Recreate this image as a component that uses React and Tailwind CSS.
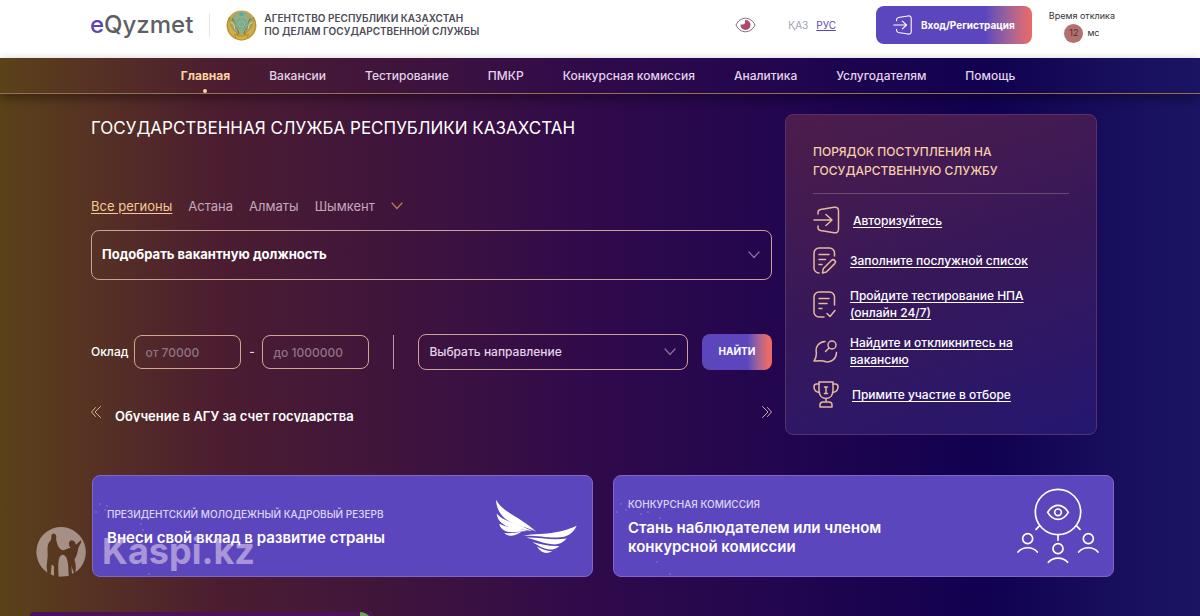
import React, { useState } from 'react';

const NAV_ITEMS = [
    'Главная',
    'Вакансии',
    'Тестирование',
    'ПМКР',
    'Конкурсная комиссия',
    'Аналитика',
    'Услугодателям',
    'Помощь'
];

const REGIONS = ['Все регионы', 'Астана', 'Алматы', 'Шымкент'];

const RAYS = Array.from({ length: 24 }, (_, i) => i * 15);

const SPARKS = [[7, 28], [14, 30], [3, 36], [12, 34], [34, 36], [46, 42], [48, 48], [43, 86], [56, 98], [27, 38], [50, 54]];

const Emblem = () => (
    <svg width="31" height="31" viewBox="0 0 62 62" aria-hidden="true">
        <circle cx="31" cy="31" r="30" fill="#c4a547" />
        <circle cx="31" cy="26" r="22" fill="#8fae86" />
        <path d="M7 14C-1 30 4 48 18 56c8-5 4-12-1-15-7-5-9-15-10-27Z" fill="#d3ae48" stroke="#8f742c" />
        <path d="M55 14c8 16 3 34-11 42-8-5-4-12 1-15 7-5 9-15 10-27Z" fill="#d3ae48" stroke="#8f742c" />
        <path d="M12 17c5 5 8 11 7 18 4 3 7 8 6 14M50 17c-5 5-8 11-7 18-4 3-7 8-6 14" fill="none" stroke="#96752c" strokeWidth="3" />
        <path d="M9 25c6 1 9 6 8 12M53 25c-6 1-9 6-8 12" fill="none" stroke="#efd577" strokeWidth="2" />
        <circle cx="31" cy="28" r="13" fill="#5ba5a0" />
        {RAYS.map((a) => (
            <path key={a} d="M31 20V12" stroke="#b9bd74" strokeWidth="1" transform={`rotate(${a} 31 28)`} />
        ))}
        <circle cx="31" cy="28" r="6" fill="none" stroke="#cfc777" strokeWidth="1.5" />
        <path d="M27 24l8 8M35 24l-8 8" stroke="#c2b861" strokeWidth="1.5" />
        <path d="M31 2l2 4h4l-3 3 1 4-4-2-4 2 1-4-3-3h4Z" fill="#57a7a6" />
        <path d="M17 48c8 6 20 6 28 0l-3 9c-7 4-15 4-22 0Z" fill="#d7b13f" stroke="#8f742c" />
    </svg>
);

const LoginIcon = ({ size }) => (
    <svg width={size} height={size} viewBox="0 0 28 28" fill="none" stroke="currentColor" strokeWidth="1.5" strokeLinecap="round" strokeLinejoin="round" aria-hidden="true">
        <path d="M5 8V6.500Q5 4 7.500 3.500L21 1.300Q25.500.7 25.500 5V23Q25.500 27.300 21 26.700L7.500 24.500Q5 24 5 21.500V20" />
        <path d="M1 14H18.500M13 8.500L19 14L13 19.500" />
    </svg>
);

const FormEditIcon = () => (
    <svg width="25" height="27" viewBox="0 0 25 27" fill="none" stroke="currentColor" strokeWidth="1.500" strokeLinecap="round" strokeLinejoin="round" aria-hidden="true">
        <path d="M21.500 9V6a5 5 0 0 0-5-5H6a5 5 0 0 0-5 5v15a5 5 0 0 0 5 5" />
        <path d="M6 7.500h10M6 12.500h6.500M6 17.500h3" />
        <path d="M9.500 26l.7-4.200 8.200-8.300a2.200 2.200 0 0 1 3.300 3.100l-8.300 8.400Z" />
    </svg>
);

const FormCheckIcon = () => (
    <svg width="25" height="27" viewBox="0 0 25 27" fill="none" stroke="currentColor" strokeWidth="1.500" strokeLinecap="round" strokeLinejoin="round" aria-hidden="true">
        <path d="M21.500 14V6a5 5 0 0 0-5-5H6a5 5 0 0 0-5 5v15a5 5 0 0 0 5 5h5" />
        <path d="M6 7.500h10M6 12.500h8M6 17.500h3" />
        <path d="M14 22.500l3 3 5-6" />
    </svg>
);

const RespondIcon = () => (
    <svg width="25" height="23" viewBox="0 0 25 23" fill="none" stroke="currentColor" strokeWidth="1.500" strokeLinecap="round" strokeLinejoin="round" aria-hidden="true">
        <path d="M12 1.500C6 2 2.500 6.500 3.200 11.500C3.700 15.500 3 18.500 1 21C5 21 9.500 20.300 13 21.800C19 22.500 23.300 18.500 23.500 12.500" />
        <circle cx="19" cy="5" r="4" />
        <path d="M16 8l-3.500 3.500" />
    </svg>
);

const TrophyIcon = () => (
    <svg width="27" height="27" viewBox="0 0 27 27" fill="none" stroke="currentColor" strokeWidth="1.500" strokeLinecap="round" strokeLinejoin="round" aria-hidden="true">
        <path d="M6 1h14v8c0 5-2.500 8.500-7 8.500S6 14 6 9Z" />
        <path d="M6 3H3.500Q1 3 1 6c0 3 2 5 5.500 5.500M20 3h2.500Q25 3 25 6c0 3-2 5-5.500 5.500" />
        <path d="M11.500 6h3M13 6v6.500M11.500 12.500h3M13 17.500v3M7 26v-2q0-3 3-3h6q3 0 3 3v2Z" />
    </svg>
);

const EyeIcon = () => (
    <svg width="21" height="16" viewBox="0 0 21 16" fill="none" aria-hidden="true">
        <path d="M1 8C5-1 16-1 20 8C16 17 5 17 1 8Z" stroke="#7d6688" strokeWidth="1" />
        <circle cx="10.500" cy="8" r="5" fill="#ad4a6c" />
        <path d="M10 2.500v2.500A2.500 2.500 0 0 1 7.500 7.500H5a5 5 0 0 1 5-5Z" fill="#fff" />
    </svg>
);

const Chevron = ({ className }) => (
    <svg className={className} width="12" height="8" viewBox="0 0 12 8" fill="none" stroke="currentColor" strokeWidth="1.200" strokeLinecap="round" aria-hidden="true">
        <path d="M1 1l5 5.500L11 1" />
    </svg>
);

const DoubleArrow = ({ className }) => (
    <svg className={className} width="10" height="12" viewBox="0 0 10 12" fill="none" stroke="currentColor" strokeWidth="1" strokeLinecap="round" aria-hidden="true">
        <path d="M4.500 1.500L.5 6l4 4.500M9.500.5L4 6l5.500 5.500" />
    </svg>
);

const WingsIcon = () => (
    <svg className="shrink-0" width="83" height="56" viewBox="0 0 250 168" fill="#fff" aria-hidden="true">
        <path d="M3 5C20 35 48 47 72 62C92 75 108 86 124 101C96 88 74 86 48 73C22 60 5 38 3 5Z" />
        <path d="M5 46C20 64 48 73 70 80L112 99C84 94 60 94 42 87C20 79 7 65 5 46Z" />
        <path d="M13 77C30 87 60 88 98 99C72 100 54 105 38 101C24 97 15 89 13 77Z" />
        <path d="M28 104C46 108 60 103 80 101C66 109 56 114 45 113C36 112 31 109 28 104Z" />
        <path d="M84 114C120 106 150 110 182 103C210 98 228 91 246 83C236 104 220 116 196 118C160 122 130 112 84 114Z" />
        <path d="M94 119C132 118 170 128 216 122C204 136 190 141 172 139C146 137 124 127 94 119Z" />
        <path d="M112 132C138 139 166 146 194 144C180 156 166 157 150 152C136 147 124 139 112 132Z" />
        <path d="M126 146C140 154 154 160 172 160C156 168 142 169 126 146Z" />
    </svg>
);

const ObserversIcon = () => (
    <svg className="shrink-0" width="82" height="76" viewBox="0 0 246 228" fill="none" stroke="#fff" strokeWidth="5" strokeLinecap="round" aria-hidden="true">
        <circle cx="123" cy="72" r="68" />
        <path d="M92 73c17-28 45-28 62 0-17 28-45 28-62 0Z" />
        <circle cx="123" cy="73" r="10" />
        <path d="M68 113l-11 11M178 113l11 11M123 141v16" />
        <circle cx="32" cy="152" r="15" />
        <path d="M3 192c14-17 44-17 58 0" />
        <circle cx="123" cy="182" r="15" />
        <path d="M94 223c14-17 44-17 58 0" />
        <circle cx="214" cy="152" r="15" />
        <path d="M185 192c14-17 44-17 58 0" />
    </svg>
);

const KaspiMark = () => (
    <svg width="50" height="50" viewBox="0 0 150 150" aria-hidden="true">
        <path
            fillRule="evenodd"
            fill="#e6d9d9"
            d="M75 0A75 75 0 0 1 118 136C120 122 120 110 115 98C122 88 126 72 127 62L136 45L134 40L120 53C118 44 108 36 102 42C96 48 99 58 104 62C96 64 88 68 82 70C72 68 66 60 62 44C60 40 60 36 61 28C60 18 48 16 46 26C46 34 46 38 42 43C34 50 34 64 35 78C36 90 32 108 32 120L34 137A75 75 0 0 1 75 0ZM70 92C66 104 66 124 68 149L98 147C97 124 97 106 92 94C86 80 76 80 70 92ZM47 112L44 142L54 146L54 118ZM106 116L108 140L114 138Z"
        />
    </svg>
);

const STEPS = [
    { label: 'Авторизуйтесь', icon: <LoginIcon size={28} /> },
    { label: 'Заполните послужной список', icon: <FormEditIcon /> },
    { label: 'Пройдите тестирование НПА (онлайн 24/7)', icon: <FormCheckIcon /> },
    { label: 'Найдите и откликнитесь на вакансию', icon: <RespondIcon /> },
    { label: 'Примите участие в отборе', icon: <TrophyIcon /> }
];

const Header = () => (
    <header className="flex h-[58px] items-center bg-white pr-[85px] pb-2 pl-[90px] text-[#4b4b55]">
        <a href="#home" className="text-2xl leading-8 font-medium text-[#5d5f66]">
            <span className="text-[#5b45b5]">e</span>Qyzmet
        </a>
        <div className="ml-4 h-6 w-px bg-gray-200" />
        <div className="ml-4 flex items-center gap-[7px]">
            <Emblem />
            <p className="text-[10px] leading-[13px] font-semibold">
                АГЕНТСТВО РЕСПУБЛИКИ КАЗАХСТАН
                <br />
                ПО ДЕЛАМ ГОСУДАРСТВЕННОЙ СЛУЖБЫ
            </p>
        </div>
        <button type="button" className="ml-auto" aria-label="Версия для слабовидящих">
            <EyeIcon />
        </button>
        <div className="ml-8 flex gap-2 text-[10px] leading-4">
            <a href="#kk" className="text-gray-400">ҚАЗ</a>
            <a href="#ru" className="text-[#5b45b5] underline">РУС</a>
        </div>
        <button
            type="button"
            className="ml-10 flex h-[38px] items-center gap-2 rounded-lg bg-linear-to-r from-[#5c46bd] from-70% to-[#ec6a63] px-[17px] text-[10px] font-bold text-white"
        >
            <LoginIcon size={20} />
            Вход/Регистрация
        </button>
        <div className="ml-[17px] flex flex-col items-center text-[9px] leading-4 text-[#333]">
            <span>Время отклика</span>
            <span className="flex items-center gap-1">
                <span className="flex size-[19px] items-center justify-center rounded-full bg-[#b0716f] text-[#5d2c31]">12</span>
                мс
            </span>
        </div>
    </header>
);

const Nav = () => (
    <nav className="border-b border-[#9a6f52] shadow-[0_4px_10px_rgba(0,0,0,0.4)]">
        <ul className="flex h-[35px] items-center justify-center gap-[39px] pr-1 text-xs font-medium text-[#e4d3ea]">
            {NAV_ITEMS.map((item, i) => (
                <li key={item} className="relative flex h-full items-center">
                    <a href="#nav" className={i === 0 ? 'font-bold text-[#fbd3a4]' : ''}>{item}</a>
                    {i === 0 && <span className="absolute bottom-0 left-1/2 size-1 -translate-x-1/2 rounded-full bg-[#fbd3a4]" />}
                </li>
            ))}
        </ul>
    </nav>
);

const SearchForm = () => {
    const [region, setRegion] = useState(0);

    return (
        <div className="min-w-0 flex-1">
            <h1 className="text-[17px] leading-7 text-white">ГОСУДАРСТВЕННАЯ СЛУЖБА РЕСПУБЛИКИ КАЗАХСТАН</h1>

            {/* Regions */}
            <div className="mt-[54px] flex items-center gap-4 text-[13px] leading-5 text-[#c3a9bd]">
                {REGIONS.map((name, i) => (
                    <button
                        key={name}
                        type="button"
                        onClick={() => setRegion(i)}
                        className={i === region ? 'text-[#f5c997] underline underline-offset-2' : ''}
                    >
                        {name}
                    </button>
                ))}
                <button type="button" aria-label="Другие регионы">
                    <Chevron className="text-[#b9824f]" />
                </button>
            </div>

            <div className="relative mt-[14px]">
                <select aria-label="Вакантная должность" className="h-[50px] w-full appearance-none rounded-lg border border-[#c9a09a] px-[10px] text-[13px] font-bold text-white">
                    <option>Подобрать вакантную должность</option>
                </select>
                <Chevron className="pointer-events-none absolute top-[21px] right-3 text-[#8d7196]" />
            </div>

            {/* Salary and direction */}
            <div className="mt-[54px] flex items-center text-xs font-medium text-[#e4d3ea]">
                <label htmlFor="salary-from" className="text-white">Оклад</label>
                <input id="salary-from" placeholder="от 70000" className="ml-[6px] h-[34px] w-[107px] rounded-lg border border-[#d3a590] px-[10px] placeholder:text-[#8f7485]" />
                <span className="w-[21px] text-center">-</span>
                <input aria-label="Оклад до" placeholder="до 1000000" className="h-[34px] w-[107px] rounded-lg border border-[#d3a590] px-[10px] placeholder:text-[#8f7485]" />
                <span className="mx-6 h-[34px] w-px bg-[#b79bb0]" />
                <div className="relative flex-1">
                    <select aria-label="Направление" className="block h-9 w-full appearance-none rounded-lg border border-[#c9a09a] px-[10px]">
                        <option>Выбрать направление</option>
                    </select>
                    <Chevron className="pointer-events-none absolute top-[14px] right-3 text-[#8d7196]" />
                </div>
                <button type="button" className="ml-[14px] h-9 w-[70px] rounded-lg bg-linear-to-r from-[#5c46bd] from-65% to-[#ec6a63] to-95% text-[10px] font-bold text-white">
                    НАЙТИ
                </button>
            </div>

            {/* News slider */}
            <div className="mt-9 flex items-start text-[#d8ab8c]">
                <button type="button" aria-label="Назад">
                    <DoubleArrow />
                </button>
                <a href="#news" className="ml-[14px] h-4 flex-1 overflow-hidden text-[13px] leading-5 font-semibold text-white">
                    Обучение в АГУ за счет государства
                </a>
                <button type="button" aria-label="Вперёд" className="text-[#cfa9b0]">
                    <DoubleArrow className="rotate-180" />
                </button>
            </div>
        </div>
    );
};

const StepsPanel = () => (
    <aside className="w-[312px] shrink-0 rounded-lg border border-[#57336b] bg-linear-160 from-[#4d1c4a] via-[#37175a] to-[#241670] px-[27px] pt-[27px] pb-[26px]">
        <h2 className="text-xs leading-[19px] font-medium text-[#f5cfa9]">
            ПОРЯДОК ПОСТУПЛЕНИЯ НА
            <br />
            ГОСУДАРСТВЕННУЮ СЛУЖБУ
        </h2>
        <hr className="mt-[13px] border-[#6d4870]" />
        <ol className="mt-3 flex flex-col gap-[13px]">
            {STEPS.map(({ label, icon }) => (
                <li key={label} className="flex min-h-[27px] items-center gap-3 text-[#e5b99c]">
                    {icon}
                    <a href="#step" className="max-w-[184px] text-xs leading-[17px] font-medium text-white underline underline-offset-2">{label}</a>
                </li>
            ))}
        </ol>
    </aside>
);

const Promo = ({ kicker, title, children }) => (
    <a href="#promo" className="relative flex min-h-[102px] flex-1 items-center justify-between rounded-lg border border-[#8366c4] bg-[#5c46bd] px-[14px] text-white">
        <svg className="absolute top-0 left-0" width="64" height="100" viewBox="0 0 64 100" fill="#8f7cd8" aria-hidden="true">
            {SPARKS.map(([x, y]) => (
                <circle key={`${x}-${y}`} cx={x} cy={y} r="1" opacity="0.6" />
            ))}
        </svg>
        <span className="relative">
            <span className="block text-[10px] leading-4 font-medium text-[#ded6f7]">{kicker}</span>
            <span className="mt-[6px] block max-w-[290px] text-[15px] leading-[19px] font-semibold">{title}</span>
        </span>
        {children}
    </a>
);

export default function App() {
    return (
        <div className="flex min-h-screen flex-col font-['Inter',sans-serif]">
            <Header />
            <div className="flex flex-1 flex-col bg-[linear-gradient(90deg,#5b4219_0%,#552f25_9%,#4c1d30_18%,#3d133e_35%,#2f0a4b_50%,#20054f_67%,#110150_82%,#191260_96%,#1a1464_100%)]">
                <Nav />
                <main className="flex flex-1 flex-col pt-5">
                    <div className="flex gap-[13px] pr-[103px] pl-[91px]">
                        <SearchForm />
                        <StepsPanel />
                    </div>

                    <div className="relative mt-10 flex gap-5 pr-[86px] pl-[92px]">
                        <Promo kicker="ПРЕЗИДЕНТСКИЙ МОЛОДЕЖНЫЙ КАДРОВЫЙ РЕЗЕРВ" title="Внеси свой вклад в развитие страны">
                            <WingsIcon />
                        </Promo>
                        <Promo kicker="КОНКУРСНАЯ КОМИССИЯ" title="Стань наблюдателем или членом конкурсной комиссии">
                            <ObserversIcon />
                        </Promo>
                        <div className="pointer-events-none absolute bottom-0 left-9 flex items-start gap-4 opacity-55">
                            <KaspiMark />
                            <span className="text-4xl leading-[48px] font-bold text-[#e6d9f0]">Kaspi.kz</span>
                        </div>
                    </div>

                    <div className="mt-auto ml-[30px] flex h-1 w-[342px] justify-end overflow-hidden rounded-tl-lg bg-[#4b1257]">
                        <span className="h-4 w-3 rounded-tr-full bg-[#62a84f]" />
                    </div>
                </main>
            </div>
        </div>
    );
}
